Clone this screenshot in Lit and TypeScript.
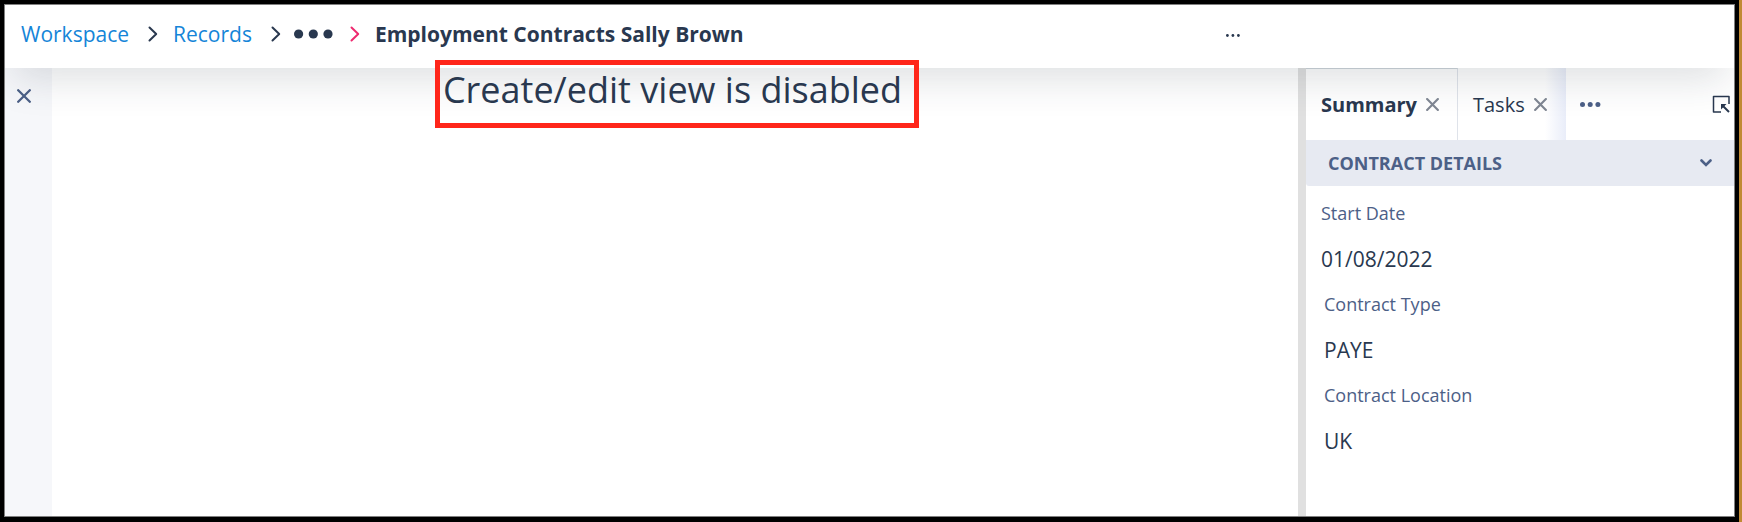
import { LitElement, html, css, svg } from "lit";
import { customElement, state } from "lit/decorators.js";

const chevronRight = (cls: string) => html`<svg class="sep ${cls}" width="10" height="16" viewBox="0 0 10 16" aria-hidden="true">
  <path d="M1.5 1.5 8.2 8 1.5 14.5" fill="none" stroke="currentColor" stroke-width="2" stroke-linecap="round" stroke-linejoin="round" />
</svg>`;

const cross = (size: number) => html`<svg width=${size} height=${size} viewBox="0 0 14 14" aria-hidden="true">
  <path d="M1.2 1.2 12.8 12.8M12.8 1.2 1.2 12.8" fill="none" stroke="currentColor" stroke-width="2.3" stroke-linecap="round" />
</svg>`;

const dots = (radius: number, step: number) => {
  const w = Math.ceil(radius * 2 + step * 2);
  const h = Math.ceil(radius * 2);
  return html`<svg width=${w} height=${h} viewBox="0 0 ${w} ${h}" aria-hidden="true">
    ${[0, 1, 2].map((i) => svg`<circle cx=${radius + i * step} cy=${h / 2} r=${radius} fill="currentColor" />`)}
  </svg>`;
};

@customElement("app-root")
export class AppRoot extends LitElement {
  @state() private open = true;

  private fields = [
    { label: "Start Date", value: "01/08/2022", inset: false },
    { label: "Contract Type", value: "PAYE", inset: true },
    { label: "Contract Location", value: "UK", inset: true },
  ];

  static styles = css`
    :host {
      display: block;
      box-sizing: border-box;
      height: 100vh;
      padding-right: 3px;
      background: #c08a34;
      font-family: "Open Sans", "Noto Sans", sans-serif;
      color: #29384f;
    }
    * {
      box-sizing: border-box;
    }
    button {
      display: flex;
      align-items: center;
      padding: 0;
      border: 0;
      background: none;
      font: inherit;
      color: inherit;
      cursor: pointer;
    }
    svg {
      display: block;
      flex: none;
    }
    .frame {
      height: 100%;
      border: 4px solid #000;
      border-bottom-width: 5px;
    }
    .app {
      height: 100%;
      display: flex;
      flex-direction: column;
      overflow: hidden;
      border: 1px solid #808080;
      background: #fff;
    }
    .header {
      position: relative;
      z-index: 1;
      flex: none;
      height: 63px;
      padding: 0 16px 6px;
      display: flex;
      align-items: center;
      justify-content: space-between;
      background: #fff;
      box-shadow: 0 18px 40px -8px rgba(40, 48, 60, 0.16);
    }
    .crumbs {
      display: flex;
      align-items: center;
      font-size: 21px;
      line-height: 28px;
      white-space: nowrap;
    }
    .crumbs a {
      color: #1585d8;
      text-decoration: none;
    }
    .sep {
      margin: 0 15px 0 19px;
    }
    .sep.tight {
      margin-right: 13px;
    }
    .sep.last {
      color: #ee2a6f;
      margin-left: 17px;
    }
    .current {
      font-weight: 700;
    }
    .actions {
      width: 492px;
      padding-top: 4px;
    }
    .body {
      flex: 1;
      min-height: 0;
      display: flex;
    }
    .rail {
      flex: none;
      width: 47px;
      padding: 21px 12px;
      background: #f6f7fa;
      color: #4c6087;
    }
    .main {
      flex: 1;
      min-width: 0;
      padding-left: 4px;
      display: flex;
      justify-content: center;
      align-items: flex-start;
    }
    .notice {
      position: relative;
      z-index: 2;
      margin: -8px 0 0;
      padding: 0 12px 8px 3px;
      border: 5px solid #ff261a;
      font-size: 36px;
      font-weight: 400;
      line-height: 50px;
      white-space: nowrap;
    }
    .divider {
      flex: none;
      width: 8px;
      background: #e0e0e0;
    }
    .panel {
      flex: none;
      width: 428px;
    }
    .tabs {
      display: flex;
      height: 72px;
      padding-right: 4px;
    }
    .tab {
      display: flex;
      align-items: center;
      gap: 9px;
      padding: 0 19px 0 15px;
      font-size: 20px;
      white-space: nowrap;
    }
    .tab.active {
      padding-right: 18px;
      border-top: 1px solid #cfd6dc;
      border-right: 1px solid #dfe3ea;
      font-weight: 700;
    }
    .tab.fade {
      background: linear-gradient(to left, #e9edf9, rgba(233, 237, 249, 0) 21px);
    }
    .tab .close {
      color: #808793;
    }
    .more {
      padding: 0 14px;
      color: #4c6087;
    }
    .expand {
      margin-left: auto;
    }
    .section {
      width: 100%;
      height: 46px;
      padding: 0 22px;
      justify-content: space-between;
      background: #e7eaf2;
      border-bottom-left-radius: 3px;
      color: #4c6087;
      font-size: 18px;
      font-weight: 700;
    }
    .fields {
      margin: 0;
      padding: 5px 15px;
    }
    .inset {
      padding-left: 3px;
    }
    dt {
      font-size: 18px;
      line-height: 45px;
      color: #4c6087;
    }
    dd {
      margin: 0;
      font-size: 21px;
      line-height: 46px;
    }
  `;

  render() {
    return html`<div class="frame"><div class="app">
      <header class="header">
        <nav class="crumbs" aria-label="Breadcrumb">
          <a href="#workspace">Workspace</a>${chevronRight("")}
          <a href="#records">Records</a>${chevronRight("tight")}
          <button aria-label="Show hidden levels">${dots(4.6, 14.7)}</button>${chevronRight("last")}
          <span class="current" aria-current="page">Employment Contracts Sally Brown</span>
        </nav>
        <div class="actions"><button aria-label="More actions">${dots(1.4, 5.5)}</button></div>
      </header>
      <div class="body">
        <aside class="rail"><button aria-label="Close view">${cross(14)}</button></aside>
        <main class="main"><h1 class="notice">Create/edit view is disabled</h1></main>
        <div class="divider"></div>
        <section class="panel">
          <div class="tabs">
            <div class="tab active">
              <button>Summary</button>
              <button class="close" aria-label="Close Summary">${cross(13)}</button>
            </div>
            <div class="tab fade">
              <button>Tasks</button>
              <button class="close" aria-label="Close Tasks">${cross(13)}</button>
            </div>
            <button class="more" aria-label="More tabs">${dots(2.5, 7.7)}</button>
            <button class="expand" aria-label="Pop out panel">
              <svg width="18" height="18" viewBox="0 0 18 18" aria-hidden="true">
                <path d="M9 17H1.5V1.5H17V9" fill="none" stroke="#29384f" stroke-width="1.5" stroke-linejoin="round" />
                <path d="M10.5 10.5 17 17" fill="none" stroke="#29384f" stroke-width="2" />
                <path d="M9 9h5.5L9 14.5z" fill="#29384f" />
              </svg>
            </button>
          </div>
          <button class="section" aria-expanded=${this.open ? "true" : "false"} @click=${() => (this.open = !this.open)}>
            CONTRACT DETAILS
            <svg width="12" height="8" viewBox="0 0 12 8" aria-hidden="true">
              <path d="M1.5 1.5 6 6 10.5 1.5" fill="none" stroke="currentColor" stroke-width="2.6" stroke-linecap="round" />
            </svg>
          </button>
          ${this.open
            ? html`<dl class="fields">
                ${this.fields.map(
                  (f) => html`<div class=${f.inset ? "inset" : ""}><dt>${f.label}</dt><dd>${f.value}</dd></div>`
                )}
              </dl>`
            : null}
        </section>
      </div>
    </div></div>`;
  }
}
